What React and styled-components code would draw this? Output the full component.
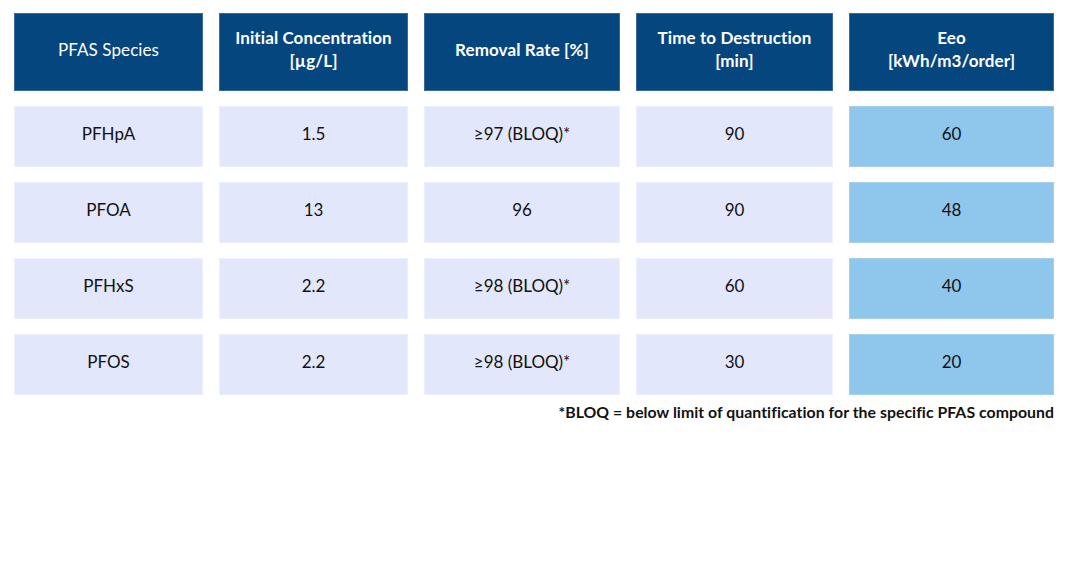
import React from 'react';
import styled, { createGlobalStyle } from 'styled-components';

const GlobalStyle = createGlobalStyle`
  html, body {
    margin: 0;
    padding: 0;
    background: #ffffff;
  }
  body {
    font-family: Lato, 'Open Sans', 'Liberation Sans', sans-serif;
  }
`;

const Page = styled.div`
  width: 1068px;
  height: 580px;
  padding: 13px 14px 0 14px;
  box-sizing: border-box;
`;

const Table = styled.div`
  display: grid;
  grid-template-columns: 189px 189px 196px 197px 205px;
  grid-template-rows: 78px repeat(4, 61px);
  column-gap: 16px;
  row-gap: 15px;
`;

const HeadCell = styled.div`
  background: #05467f;
  border: 1px solid #3a6a9c;
  box-sizing: border-box;
  color: #ffffff;
  display: flex;
  align-items: center;
  justify-content: center;
  text-align: center;
  font-size: 17px;
  line-height: 23px;
  padding-bottom: 6px;
  font-weight: ${props => (props.light ? 400 : 700)};
  letter-spacing: 0.1px;
`;

const Cell = styled.div`
  background: ${props => (props.accent ? '#8fc6ec' : '#e3e7fc')};
  border: 1px solid ${props => (props.accent ? '#a3d0ef' : '#eceffd')};
  box-sizing: border-box;
  color: #111111;
  display: flex;
  align-items: center;
  justify-content: center;
  font-size: 17px;
  padding-bottom: 7px;
`;

const Footnote = styled.div`
  text-align: right;
  margin-top: 7px;
  font-size: 15.8px;
  letter-spacing: 0.05px;
  font-weight: 700;
  color: #111111;
`;

const headers = [
  { lines: ['PFAS Species'], light: true },
  { lines: ['Initial Concentration', '[µg/L]'] },
  { lines: ['Removal Rate [%]'] },
  { lines: ['Time to Destruction', '[min]'] },
  { lines: ['Eeo', '[kWh/m3/order]'] },
];

const rows = [
  ['PFHpA', '1.5', '≥97 (BLOQ)*', '90', '60'],
  ['PFOA', '13', '96', '90', '48'],
  ['PFHxS', '2.2', '≥98 (BLOQ)*', '60', '40'],
  ['PFOS', '2.2', '≥98 (BLOQ)*', '30', '20'],
];

export default function App() {
  return (
    <Page>
      <GlobalStyle />
      <Table>
        {headers.map((h, i) => (
          <HeadCell key={i} light={h.light}>
            <div>
              {h.lines.map((l, j) => (
                <div key={j}>{l}</div>
              ))}
            </div>
          </HeadCell>
        ))}
        {rows.map((r, i) =>
          r.map((v, j) => (
            <Cell key={i + '-' + j} accent={j === 4}>
              {v}
            </Cell>
          ))
        )}
      </Table>
      <Footnote>*BLOQ = below limit of quantification for the specific PFAS compound</Footnote>
    </Page>
  );
}
